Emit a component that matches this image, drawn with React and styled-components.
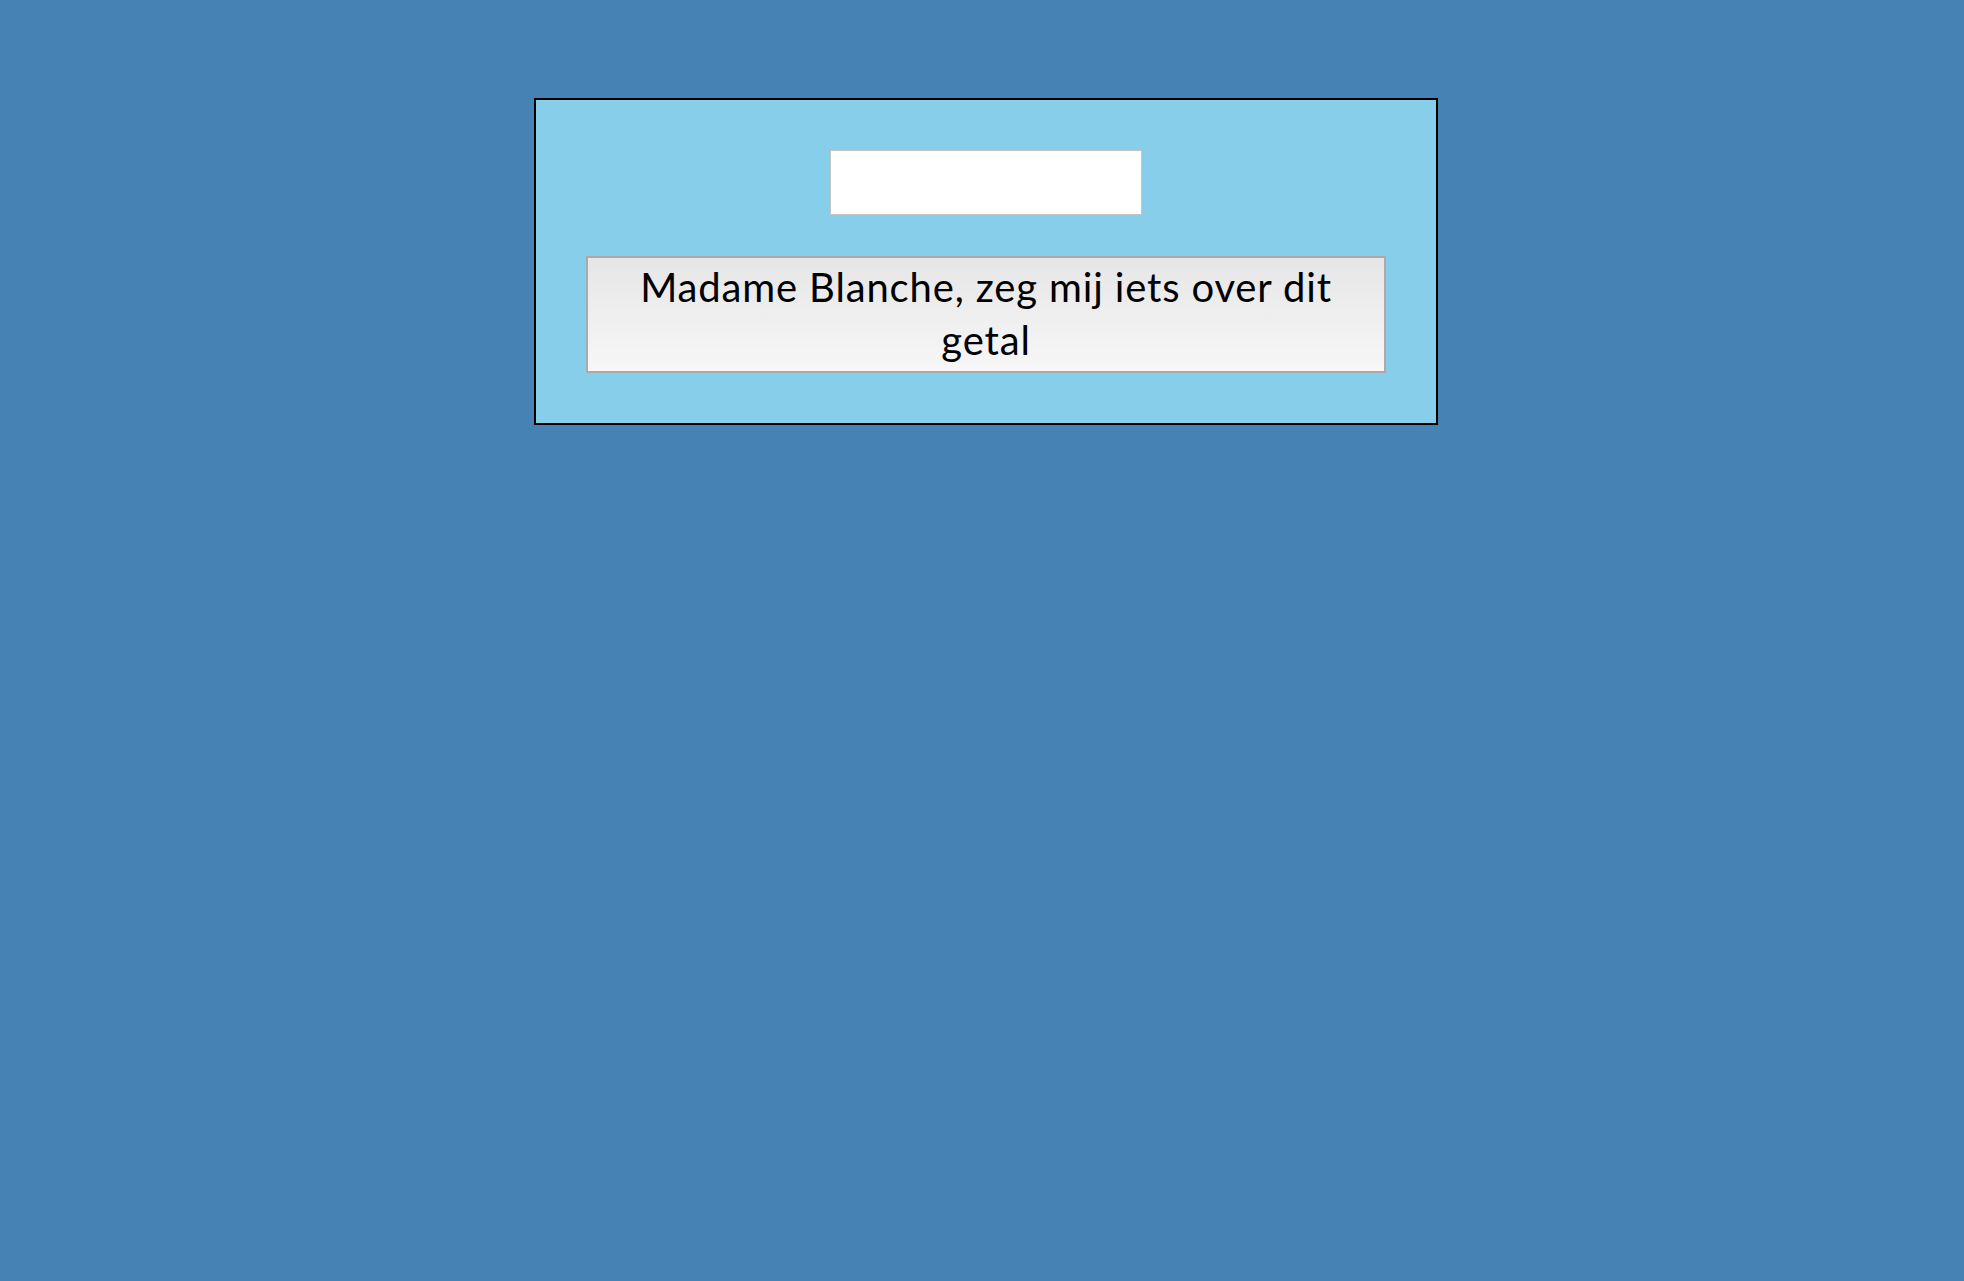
import React from "react";
import styled, { createGlobalStyle } from "styled-components";

const GlobalStyle = createGlobalStyle`
  html, body {
    margin: 0;
    padding: 0;
    min-height: 100%;
    background-color: #4682b4;
  }
  body {
    min-height: 1281px;
    font-family: "Lato", "Noto Sans", sans-serif;
  }
`;

const Page = styled.div`
  min-height: 1281px;
  padding: 98px 0 0 8px;
  box-sizing: border-box;
  display: flex;
  justify-content: center;
  align-items: flex-start;
`;

const Panel = styled.div`
  width: 800px;
  padding: 50px;
  box-sizing: content-box;
  background-color: #87ceeb;
  border: 2px solid #000;
  display: flex;
  flex-direction: column;
  align-items: center;
  gap: 41px;
`;

const NumberInput = styled.input`
  width: 312px;
  height: 65px;
  box-sizing: border-box;
  background: #fff;
  border: 1px solid #c4c4c4;
  font-family: inherit;
  font-size: 36px;
  padding: 0 8px;
  outline: none;
`;

const AskButton = styled.button`
  width: 800px;
  height: 117px;
  box-sizing: border-box;
  border: 2px solid #aaaaaa;
  background: linear-gradient(to bottom, #e6e6e6, #f7f7f7);
  font-family: "Lato", "Noto Sans", sans-serif;
  font-size: 40px;
  letter-spacing: 0.85px;
  line-height: 53px;
  color: #000;
  padding: 0 50px 2px;
  text-align: center;
  cursor: pointer;
`;

export default function App() {
  return (
    <>
      <GlobalStyle />
      <Page>
        <Panel>
          <NumberInput type="text" />
          <AskButton>Madame Blanche, zeg mij iets over dit getal</AskButton>
        </Panel>
      </Page>
    </>
  );
}
